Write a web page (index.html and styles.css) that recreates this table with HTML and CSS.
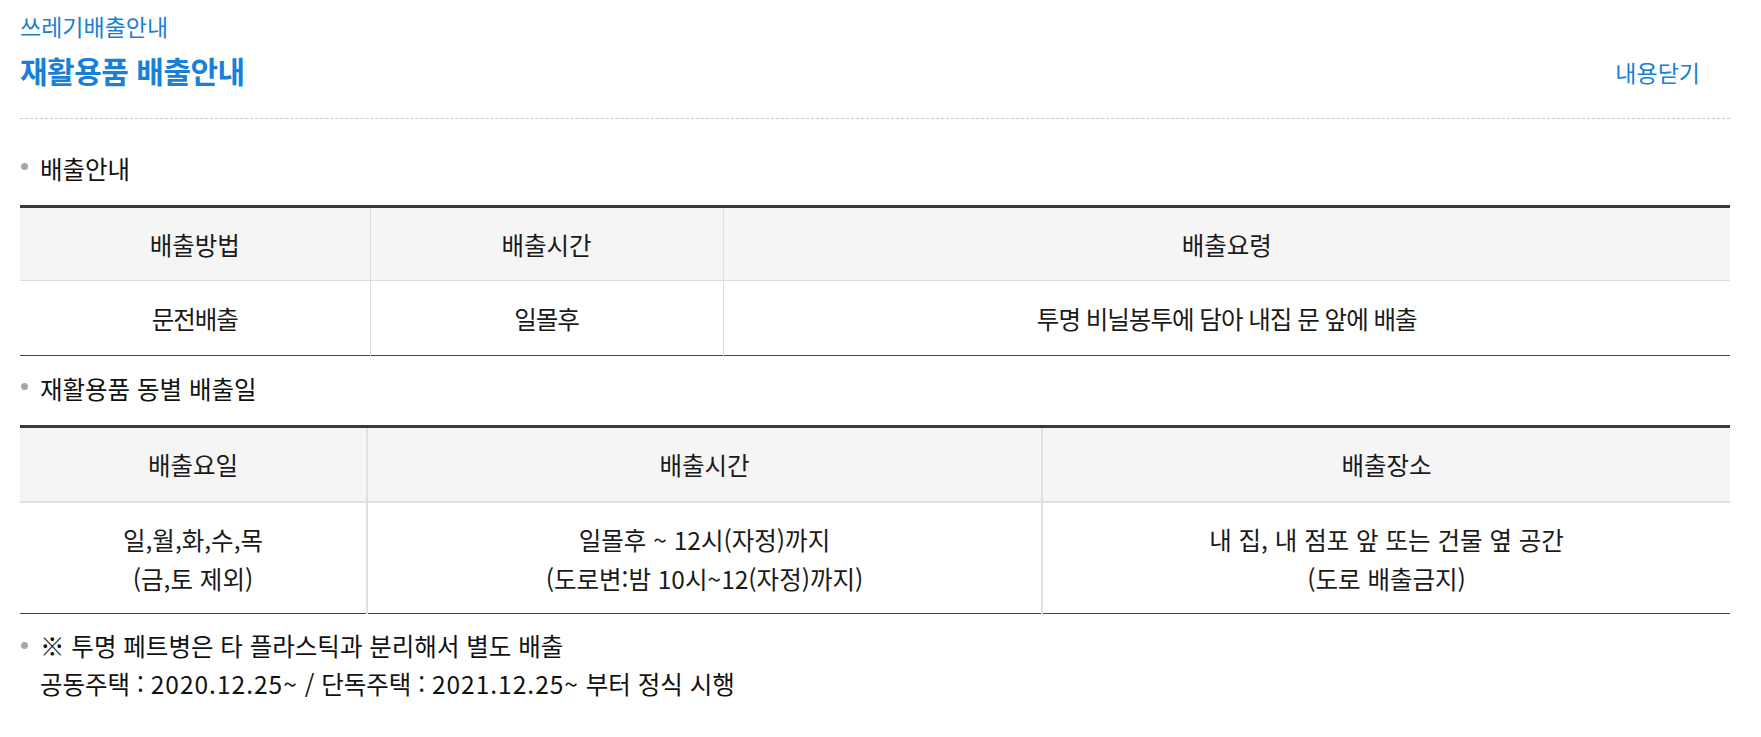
FILE: index.html
```html
<!DOCTYPE html>
<html lang="ko">
<head>
<meta charset="utf-8">
<title>재활용품 배출안내</title>
<link rel="stylesheet" href="styles.css">
</head>
<body>
<div class="page">
  <div class="crumb">쓰레기배출안내</div>
  <div class="head">
    <h1 class="title">재활용품 배출안내</h1>
    <a class="close" href="#">내용닫기</a>
  </div>

  <h2 class="sec">배출안내</h2>
  <table class="tbl tbl-a">
    <colgroup>
      <col class="c-a1"><col class="c-a2"><col>
    </colgroup>
    <thead>
      <tr><th>배출방법</th><th>배출시간</th><th>배출요령</th></tr>
    </thead>
    <tbody>
      <tr><td>문전배출</td><td>일몰후</td><td>투명 비닐봉투에 담아 내집 문 앞에 배출</td></tr>
    </tbody>
  </table>

  <h2 class="sec sec2">재활용품 동별 배출일</h2>
  <table class="tbl tbl-b">
    <colgroup>
      <col class="c-b1"><col class="c-b2"><col>
    </colgroup>
    <thead>
      <tr><th>배출요일</th><th>배출시간</th><th>배출장소</th></tr>
    </thead>
    <tbody>
      <tr>
        <td>일,월,화,수,목<br>(금,토 제외)</td>
        <td>일몰후 ~ 12시(자정)까지<br>(도로변:밤 10시~12(자정)까지)</td>
        <td>내 집, 내 점포 앞 또는 건물 옆 공간<br>(도로 배출금지)</td>
      </tr>
    </tbody>
  </table>

  <div class="note">
    <p class="note-line bullet">※ 투명 페트병은 타 플라스틱과 분리해서 별도 배출</p>
    <p class="note-line">공동주택 : <span class="num">2020.12.25~</span> / 단독주택 : <span class="num">2021.12.25~</span> 부터 정식 시행</p>
  </div>
</div>
</body>
</html>
```

FILE: styles.css
```css
* { box-sizing: border-box; }
html, body { margin: 0; padding: 0; background: #fff; }
body {
  font-family: "Noto Sans CJK KR", "Noto Sans", sans-serif;
  color: #111;
}
.page {
  width: 1761px;
  padding: 11px 31px 0 20px;
}
.crumb {
  font-size: 23px;
  line-height: 30px;
  color: #1a7fd6;
}
.head {
  display: flex;
  justify-content: space-between;
  align-items: center;
  height: 78px;
  padding-bottom: 20px;
  border-bottom: 1px dashed #c8c8c8;
}
.title {
  margin: 0;
  font-size: 30px;
  font-weight: 700;
  line-height: 38px;
  color: #1a7fd6;
  letter-spacing: -0.5px;
}
.close {
  margin-right: 30px;
  margin-top: 4px;
  font-size: 23px;
  line-height: 30px;
  color: #1a7fd6;
  text-decoration: none;
}
.sec {
  position: relative;
  margin: 32px 0 18px;
  padding-left: 20px;
  font-size: 24.5px;
  font-weight: 400;
  line-height: 36px;
  color: #111;
}
.sec::before,
.bullet::before {
  content: "";
  position: absolute;
  left: 1px;
  top: 12px;
  width: 7px;
  height: 7px;
  border-radius: 50%;
  background: #a6a6a6;
}
.sec2 { margin-top: 15px; }
.tbl {
  width: 100%;
  border-collapse: collapse;
  table-layout: fixed;
  border-top: 3px solid #3a3a3a;
  border-bottom: 1px solid #444;
  font-size: 24.5px;
  color: #1a1a1a;
}
.tbl th, .tbl td {
  padding: 0;
  text-align: center;
  vertical-align: middle;
  font-weight: 400;
}
.tbl th { background: #f5f5f5; }
.tbl-a th { height: 74px; border-bottom: 1px solid #dedede; }
.tbl-a th + th, .tbl-a td + td { border-left: 1px solid #dedede; }
.tbl-a td { height: 75px; letter-spacing: -1px; }
.c-a1 { width: 350px; }
.c-a2 { width: 353px; }
.tbl-b th { height: 75px; border-bottom: 2px solid #e0e0e0; }
.tbl-b th + th, .tbl-b td + td { border-left: 2px solid #e0e0e0; }
.tbl-b td { height: 112px; line-height: 39px; padding-top: 2px; }
.c-b1 { width: 347px; }
.c-b2 { width: 675px; }
.note { margin-top: 13px; }
.note-line {
  position: relative;
  margin: 0;
  padding-left: 20px;
  font-size: 24.5px;
  line-height: 38px;
  color: #111;
}
.note-line.bullet::before { top: 14.5px; }
.num { letter-spacing: 1px; }
```
